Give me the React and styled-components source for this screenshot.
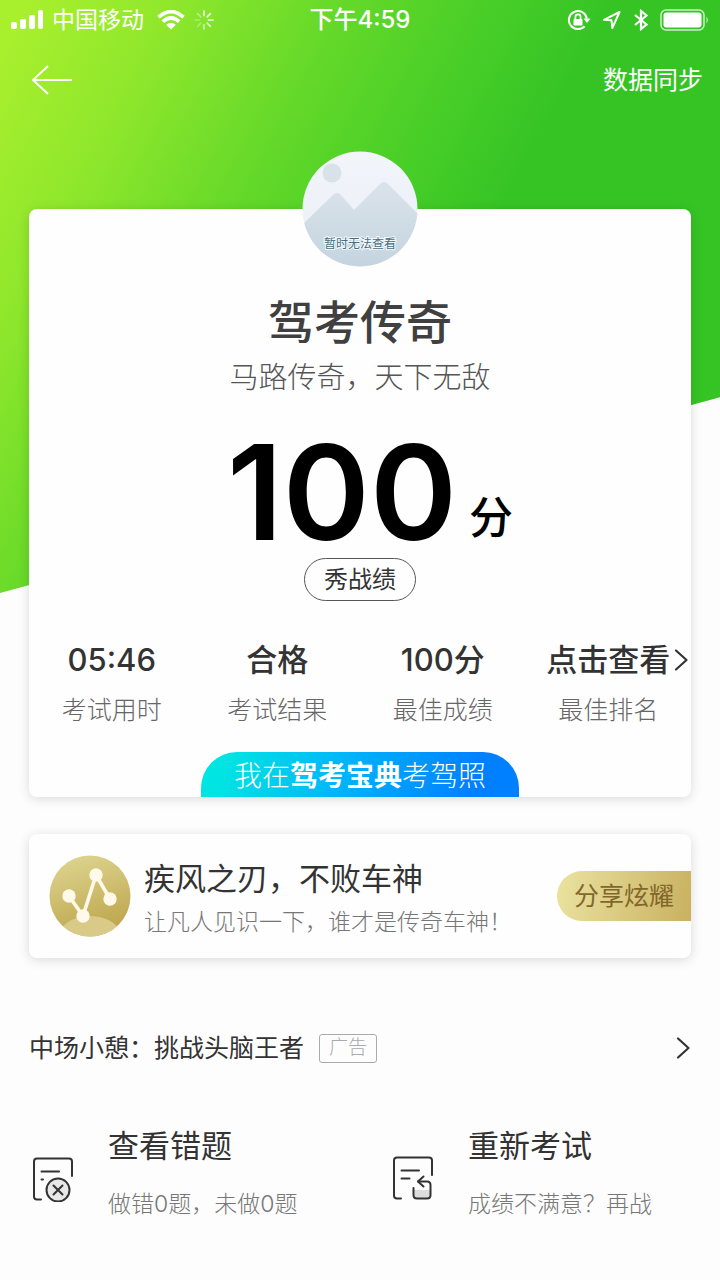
import React from "react";
import styled, { createGlobalStyle } from "styled-components";

const GlobalStyle = createGlobalStyle`
  *, *::before, *::after { box-sizing: border-box; }
  body {
    margin: 0;
    background: #fdfdfd;
    font-family: Inter, "Noto Sans CJK SC", sans-serif;
    color: #333;
  }
  h1, h2, p, dl, dt, dd { margin: 0; font-weight: inherit; }
  button { font: inherit; color: inherit; border: 0; padding: 0; background: none; cursor: pointer; }
  a { color: inherit; text-decoration: none; }
  svg { display: block; flex: none; }
`;

const Page = styled.div`
  display: grid;
  grid-template-columns: minmax(0, 1fr);
  min-height: 100vh;
`;

const Backdrop = styled.div`
  grid-area: 1 / 1;
  height: 593px;
  background: linear-gradient(118deg, #a8ef2e 3%, #8fe72c 17%, #63d829 34%, #48ce28 48%, #36c425 59%);
  clip-path: polygon(0 0, 100% 0, 100% 67%, 0 100%);
`;

const Content = styled.div`
  grid-area: 1 / 1;
  z-index: 1;
  display: flex;
  flex-direction: column;
`;

const StatusBar = styled.div`
  display: grid;
  grid-template-columns: 1fr auto 1fr;
  align-items: center;
  height: 40px;
  padding: 0 11px;
  color: #fff;
  font-size: 23px;
  line-height: 32px;
`;

const StatusGroup = styled.div`
  display: flex;
  align-items: center;
  justify-content: ${(p) => (p.$end ? "flex-end" : "flex-start")};
  gap: ${(p) => (p.$end ? "11px" : "8px")};
`;

const Carrier = styled.span`
  margin-right: 5px;
`;

const Clock = styled.time`
  font-size: 24px;
  font-weight: 500;
`;

const NavBar = styled.header`
  display: flex;
  align-items: center;
  justify-content: space-between;
  height: 80px;
  padding: 0 17px 0 31px;
  color: #fff;
`;

const SyncButton = styled.button`
  font-size: 25px;
  line-height: 36px;
`;

const Main = styled.main`
  display: flex;
  flex-direction: column;
  padding: 89px 29px 0;
`;

const Card = styled.section`
  background: #fefefe;
  border-radius: 8px;
  box-shadow: 0 2px 12px rgba(0, 0, 0, 0.14);
`;

const ResultCard = styled(Card)`
  display: flex;
  flex-direction: column;
  align-items: center;
`;

const Avatar = styled.svg`
  width: 116px;
  height: 116px;
  margin-top: -58px;
  text {
    font-size: 12px;
    font-family: "Noto Sans CJK SC", sans-serif;
  }
`;

const Title = styled.h1`
  margin-top: 22px;
  font-size: 46px;
  line-height: 66px;
  font-weight: 500;
  color: #404040;
`;

const Subtitle = styled.p`
  font-size: 29px;
  line-height: 46px;
  font-weight: 300;
  color: #555;
`;

const Score = styled.p`
  display: flex;
  align-items: flex-end;
  gap: 12px;
  margin-top: 27px;
  padding-left: 20px;
  color: #000;
`;

const ScoreNumber = styled.span`
  font-size: 132px;
  line-height: 128px;
  font-weight: 600;
`;

const ScoreUnit = styled.span`
  margin-bottom: 6px;
  font-size: 44px;
  line-height: 64px;
  font-weight: 500;
`;

const PillButton = styled.button`
  width: 112px;
  height: 43px;
  margin-top: 2px;
  border: 1px solid #555;
  border-radius: 22px;
  font-size: 24px;
  line-height: 36px;
`;

const Stats = styled.dl`
  display: grid;
  grid-template-columns: repeat(4, 1fr);
  width: 100%;
  margin-top: 35px;
`;

const Stat = styled.div`
  display: flex;
  flex-direction: column-reverse;
  align-items: center;
  gap: 4px;
`;

const StatLabel = styled.dt`
  font-size: 25px;
  line-height: 44px;
  font-weight: 300;
  color: #666;
`;

const StatValue = styled.dd`
  display: flex;
  align-items: center;
  height: 48px;
  font-size: 31px;
  line-height: 48px;
  font-weight: 500;
  white-space: nowrap;
`;

const StatLink = styled.a`
  display: flex;
  align-items: center;
  gap: 3px;
  margin-right: -19px;
`;

const Slogan = styled.p`
  width: 318px;
  height: 45px;
  margin-top: 20px;
  padding-top: 4px;
  border-radius: 36px 36px 0 0;
  background: linear-gradient(105deg, #00e4e2 8%, #00b4fa 45%, #0080ff 85%);
  color: #fff;
  font-size: 28px;
  line-height: 41px;
  font-weight: 300;
  text-align: center;
  strong { font-weight: 700; }
`;

const ShareCard = styled(Card)`
  display: flex;
  align-items: center;
  height: 124px;
  margin-top: 37px;
  padding-left: 20px;
`;

const ShareText = styled.div`
  flex: 1;
  min-width: 0;
  margin-left: 13px;
  padding-top: 8px;
  white-space: nowrap;
`;

const CardTitle = styled.h2`
  font-size: 31px;
  line-height: 44px;
  font-weight: 400;
`;

const Note = styled.p`
  font-size: 23px;
  line-height: 42px;
  font-weight: 300;
  color: #777;
`;

const ShareButton = styled.button`
  width: 134px;
  height: 50px;
  border-radius: 25px 0 0 25px;
  background: linear-gradient(100deg, #eae3a0, #c9b160);
  color: #81672c;
  font-size: 25px;
  line-height: 50px;
`;

const AdRow = styled.a`
  display: flex;
  align-items: center;
  height: 60px;
  margin-top: 60px;
  font-size: 25px;
  line-height: 36px;
`;

const AdTag = styled.span`
  display: flex;
  align-items: center;
  justify-content: center;
  width: 58px;
  height: 29px;
  margin: 0 auto 0 15px;
  border: 1px solid #aaa;
  border-radius: 3px;
  color: #aaa;
  font-size: 19px;
  font-weight: 300;
`;

const Actions = styled.nav`
  display: grid;
  grid-template-columns: repeat(2, 1fr);
  margin: 46px -29px 0;
  padding-bottom: 50px;
`;

const Action = styled.a`
  display: flex;
  align-items: center;
  gap: 34px;
  padding-left: 32px;
  white-space: nowrap;
  svg { margin-top: 8px; }
  ${Note} { margin-top: 15px; }
`;

function Chevron() {
  return (
    <svg width="16" height="24" viewBox="0 0 16 24" fill="none" stroke="#333" strokeWidth="2.2" strokeLinecap="round" strokeLinejoin="round">
      <path d="M3 2.5 13.5 12 3 21.500" />
    </svg>
  );
}

function SignalIcon() {
  return (
    <svg width="33" height="20" viewBox="0 0 33 20" fill="#fff">
      <rect x="0" y="12" width="6" height="7" rx="2" />
      <rect x="9" y="9" width="6" height="10" rx="2" />
      <rect x="18" y="5" width="6" height="14" rx="2" />
      <rect x="27" y="0" width="5" height="19" rx="2" />
    </svg>
  );
}

function WifiIcon() {
  return (
    <svg width="28" height="20" viewBox="0 0 28 20" fill="none" stroke="#fff" strokeWidth="3.6">
      <path d="M1.500 7.200Q14-4.200 26.500 7.200" />
      <path d="M5.800 11.700Q14 4.300 22.200 11.700" />
      <path d="M14 19.500 9.200 14.700Q14 11 18.800 14.700Z" fill="#fff" stroke="none" />
    </svg>
  );
}

function SpinnerIcon() {
  const opacities = [0.9, 0.85, 0.85, 0.7, 0.55, 0.3, 0.3, 0.4];
  return (
    <svg width="22" height="22" viewBox="-11 -11 22 22" stroke="#fff" strokeWidth="1.700" strokeLinecap="round">
      {opacities.map((o, i) => (
        <path key={i} d="M0-4.500V-9" opacity={o} transform={`rotate(${i * 45})`} />
      ))}
    </svg>
  );
}

function LockIcon() {
  return (
    <svg width="24" height="22" viewBox="0 0 24 22" fill="none" stroke="#fff" strokeWidth="2">
      <path d="M17.500 17.200A9 9 0 1 1 19.800 9.500" />
      <path d="M16.500 9.500h7l-3.500 4.500z" fill="#fff" stroke="none" />
      <rect x="6.500" y="10" width="9" height="6.500" rx="1" fill="#fff" stroke="none" />
      <path d="M8.400 10.500V8a2.600 2.600 0 0 1 5.200 0v2.500" strokeWidth="1.700" />
    </svg>
  );
}

function LocationIcon() {
  return (
    <svg width="20" height="20" viewBox="0 0 20 20" fill="none" stroke="#fff" strokeWidth="2" strokeLinejoin="round">
      <path d="M17.500 2 2 9.800l7.500.5.8 7.700z" />
    </svg>
  );
}

function BluetoothIcon() {
  return (
    <svg width="16" height="22" viewBox="0 0 16 22" fill="none" stroke="#fff" strokeWidth="2.2" strokeLinejoin="miter">
      <path d="M2 6l11.500 9.500L8 20V2l5.500 4.500L2 16" />
    </svg>
  );
}

function BatteryIcon() {
  return (
    <svg width="49" height="22" viewBox="0 0 49 22">
      <rect x="1" y="1" width="43" height="20" rx="5" fill="none" stroke="#fff" strokeOpacity=".75" strokeWidth="1.500" />
      <rect x="3.500" y="3.500" width="38" height="15" rx="3" fill="#fff" />
      <path d="M46.500 7.500q2.500 3.500 0 7z" fill="#fff" fillOpacity=".75" />
    </svg>
  );
}

function BackIcon() {
  return (
    <svg width="42" height="30" viewBox="0 0 42 30" fill="none" stroke="#fff" strokeWidth="2" strokeLinejoin="round">
      <path d="M41 15H2M17 1 2 15l15 14" />
    </svg>
  );
}

function AvatarPicture() {
  return (
    <Avatar viewBox="0 0 116 116" role="img">
      <defs>
        <linearGradient id="sky" x1="0" y1="0" x2="0" y2="1">
          <stop offset="0" stopColor="#f2f5fa" />
          <stop offset="1" stopColor="#e9eff7" />
        </linearGradient>
        <linearGradient id="hill" x1="0" y1="0" x2="0" y2="1">
          <stop offset="0" stopColor="#dbe3ea" />
          <stop offset="1" stopColor="#c4d4df" />
        </linearGradient>
        <clipPath id="round"><circle cx="58" cy="58" r="57.500" /></clipPath>
      </defs>
      <g clipPath="url(#round)">
        <rect width="116" height="116" fill="url(#sky)" />
        <circle cx="30" cy="22" r="9.500" fill="#d9e2e9" />
        <path d="M0 74 32 43q3-2 6 0l14 16L79 32q3-2 6 0l31 31v53H0z" fill="url(#hill)" />
      </g>
      <text x="58" y="97" textAnchor="middle" fill="#456f86" stroke="#f4f8fa" strokeWidth="2" paintOrder="stroke">暂时无法查看</text>
    </Avatar>
  );
}

function MedalIcon() {
  return (
    <svg width="82" height="82" viewBox="0 0 82 82">
      <defs>
        <linearGradient id="gold" x1="0" y1="0" x2="0.300" y2="1">
          <stop offset="0" stopColor="#e0d896" />
          <stop offset="1" stopColor="#bfa84f" />
        </linearGradient>
        <clipPath id="medal"><circle cx="41" cy="41" r="40.500" /></clipPath>
      </defs>
      <g clipPath="url(#medal)">
        <rect width="82" height="82" fill="url(#gold)" />
        <ellipse cx="41" cy="85" rx="33" ry="24" fill="#d9cb87" />
      </g>
      <path d="M20 41 34 61 47 20 61 44" fill="none" stroke="#fff9ea" strokeWidth="3.600" />
      <g fill="#fff9ea">
        <circle cx="20" cy="41" r="6.700" />
        <circle cx="34" cy="61" r="6.700" />
        <circle cx="47" cy="20" r="6.700" />
        <circle cx="61" cy="44" r="6.700" />
      </g>
    </svg>
  );
}

function WrongIcon() {
  return (
    <svg width="42" height="46" viewBox="0 0 42 46" fill="none" stroke="#333" strokeWidth="2" strokeLinecap="round" strokeLinejoin="round">
      <path d="M9 43.500H5q-3 0-3-3V5.500q0-3 3-3h32q3 0 3 3V20" />
      <path d="M9.500 15.500H27M9.500 23.500h1.500" />
      <circle cx="26" cy="34" r="11.500" fill="#e8e8e8" />
      <path d="M21.500 29.500l9 9M30.500 29.500l-9 9" />
    </svg>
  );
}

function RetryIcon() {
  return (
    <svg width="42" height="46" viewBox="0 0 42 46" fill="none" stroke="#333" strokeWidth="2" strokeLinecap="round" strokeLinejoin="round">
      <path d="M9 42.500H5q-3 0-3-3V4.500q0-3 3-3h32q3 0 3 3V19" />
      <path d="M9.500 14.500H27M9.500 22.500h8" />
      <path d="M22 34h16v5q0 3-3 3H25q-3 0-3-3z" fill="#ddd" stroke="none" />
      <path d="M21.500 32v7q0 3.500 3.500 3.500h10q3.500 0 3.500-3.500V29q0-3.500-3.500-3.500H26" />
      <path d="M31.500 20.500 26 25.500l5.500 5" />
    </svg>
  );
}

const stats = [
  { label: "考试用时", value: "05:46" },
  { label: "考试结果", value: "合格" },
  { label: "最佳成绩", value: "100分" },
  { label: "最佳排名", value: "点击查看", link: true },
];

const actions = [
  { title: "查看错题", note: "做错0题，未做0题", Icon: WrongIcon },
  { title: "重新考试", note: "成绩不满意？再战", Icon: RetryIcon },
];

export default function App() {
  return (
    <Page>
      <GlobalStyle />
      <Backdrop />
      <Content>
        <StatusBar>
          <StatusGroup>
            <SignalIcon />
            <Carrier>中国移动</Carrier>
            <WifiIcon />
            <SpinnerIcon />
          </StatusGroup>
          <Clock>下午4:59</Clock>
          <StatusGroup $end>
            <LockIcon />
            <LocationIcon />
            <BluetoothIcon />
            <BatteryIcon />
          </StatusGroup>
        </StatusBar>
        <NavBar>
          <button type="button" aria-label="返回"><BackIcon /></button>
          <SyncButton type="button">数据同步</SyncButton>
        </NavBar>
        <Main>
          <ResultCard>
            <AvatarPicture />
            <Title>驾考传奇</Title>
            <Subtitle>马路传奇，天下无敌</Subtitle>
            <Score>
              <ScoreNumber>100</ScoreNumber>
              <ScoreUnit>分</ScoreUnit>
            </Score>
            <PillButton type="button">秀战绩</PillButton>
            <Stats>
              {stats.map((s) => (
                <Stat key={s.label}>
                  <StatLabel>{s.label}</StatLabel>
                  <StatValue>
                    {s.link ? <StatLink href="#rank">{s.value}<Chevron /></StatLink> : s.value}
                  </StatValue>
                </Stat>
              ))}
            </Stats>
            <Slogan>我在<strong>驾考宝典</strong>考驾照</Slogan>
          </ResultCard>
          <ShareCard>
            <MedalIcon />
            <ShareText>
              <CardTitle>疾风之刃，不败车神</CardTitle>
              <Note>让凡人见识一下，谁才是传奇车神！</Note>
            </ShareText>
            <ShareButton type="button">分享炫耀</ShareButton>
          </ShareCard>
          <AdRow href="#ad">
            中场小憩：挑战头脑王者
            <AdTag>广告</AdTag>
            <Chevron />
          </AdRow>
          <Actions>
            {actions.map(({ title, note, Icon }) => (
              <Action key={title} href="#action">
                <Icon />
                <div>
                  <CardTitle>{title}</CardTitle>
                  <Note>{note}</Note>
                </div>
              </Action>
            ))}
          </Actions>
        </Main>
      </Content>
    </Page>
  );
}
